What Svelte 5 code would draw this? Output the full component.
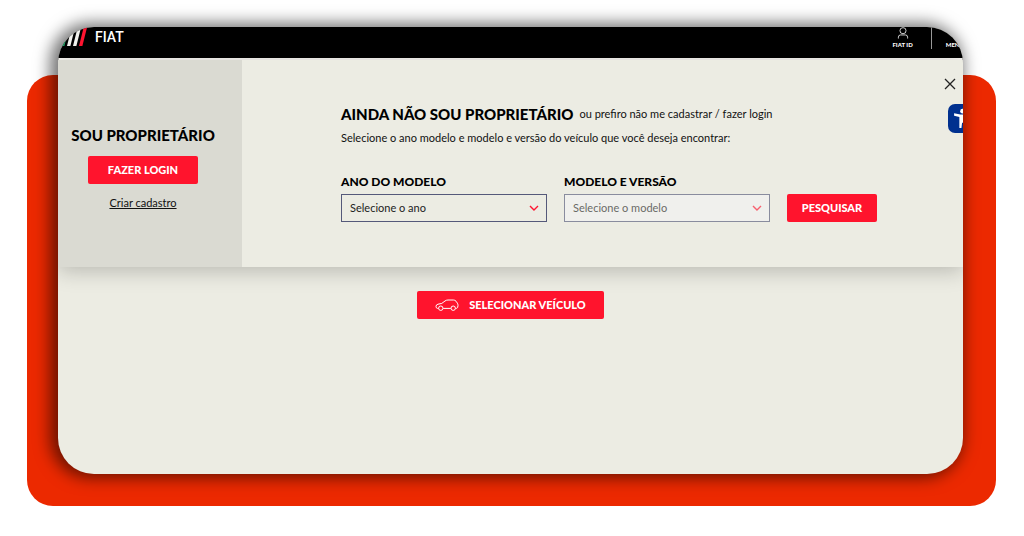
<script lang="ts">
  let year = $state("");
  let model = $state("");
  let open = $state(true);

  const bars = [
    { x: 0, color: "#1f9d63" },
    { x: 6, color: "#f2f2ee" },
    { x: 12, color: "#f2f2ee" },
    { x: 18, color: "#ff1430" },
  ];
</script>

{#snippet chevron()}
  <svg class="chevron" viewBox="0 0 10 6" aria-hidden="true">
    <path d="M1 1 L5 5 L9 1" fill="none" stroke="#ff1430" stroke-width="1.4" />
  </svg>
{/snippet}

<div class="backdrop">
  <div class="card">
    <header class="topbar">
      <a class="logo" href="#home">
        <svg class="logo-bars" viewBox="0 0 26 20" aria-hidden="true">
          {#each bars as bar}
            <path d="M{bar.x} 20 L{bar.x + 5} 0 h3.4 L{bar.x + 3.4} 20 Z" fill={bar.color} />
          {/each}
        </svg>
        <span>FIAT</span>
      </a>
      <nav class="nav">
        <a class="nav-item" href="#fiat-id">
          <svg class="user" viewBox="0 0 12 13" aria-hidden="true">
            <circle cx="6" cy="4" r="3.3" />
            <path d="M1 12.5 V11 Q1 8.6 3.4 8.6 H8.6 Q11 8.6 11 11 V12.5" />
          </svg>
          FIAT ID
        </a>
        <span class="divider"></span>
        <a class="nav-item" href="#menu">MENU</a>
      </nav>
    </header>

    {#if open}
      <section class="panel">
        <aside class="owner">
          <h2>SOU PROPRIETÁRIO</h2>
          <button class="btn login">FAZER LOGIN</button>
          <a class="signup" href="#cadastro">Criar cadastro</a>
        </aside>

        <div class="guest">
          <div class="title">
            <h2>AINDA NÃO SOU PROPRIETÁRIO</h2>
            <span>ou prefiro não me cadastrar / fazer login</span>
          </div>
          <p>Selecione o ano modelo e modelo e versão do veículo que você deseja encontrar:</p>

          <form class="search" onsubmit={(e) => e.preventDefault()}>
            <div class="field">
              <label for="year">ANO DO MODELO</label>
              <div class="select">
                <select id="year" bind:value={year}>
                  <option value="">Selecione o ano</option>
                  <option value="2024">2024</option>
                  <option value="2023">2023</option>
                </select>
                {@render chevron()}
              </div>
            </div>
            <div class="field">
              <label for="model">MODELO E VERSÃO</label>
              <div class="select" class:disabled={!year}>
                <select id="model" bind:value={model} disabled={!year}>
                  <option value="">Selecione o modelo</option>
                </select>
                {@render chevron()}
              </div>
            </div>
            <button class="btn submit">PESQUISAR</button>
          </form>
        </div>

        <button class="close" aria-label="Fechar" onclick={() => (open = false)}>
          <svg viewBox="0 0 12 12" aria-hidden="true">
            <path d="M1 1 L11 11 M11 1 L1 11" stroke="#222" stroke-width="1.3" />
          </svg>
        </button>
      </section>
    {/if}

    <main class="content">
      <button class="btn vehicle" onclick={() => (open = true)}>
        <svg class="car" viewBox="0 0 24 12" aria-hidden="true">
          <path
            d="M3.4 9.4 H2.4 Q1 9.2 1 7.4 Q1 5.6 3 5.2 L6.8 4.4 L10 2 Q11.2 1 13 1 H18.4 Q20 1 21 2.2 L22.4 4.2 Q23 5 23 6.6 Q23 9.2 21.4 9.4 H20.6 M15.8 9.4 H8.2"
          />
          <circle cx="5.8" cy="9.2" r="2.2" />
          <circle cx="18.2" cy="9.2" r="2.2" />
        </svg>
        SELECIONAR VEÍCULO
      </button>
    </main>

    <button class="a11y" aria-label="Acessibilidade">
      <svg viewBox="0 0 20 20" aria-hidden="true">
        <circle cx="10" cy="3" r="2.2" />
        <path d="M2 5 L8 6.2 H12 L18 5 V7.4 L13 8.6 V19 H11 L10.4 14 H9.6 L9 19 H7 V8.6 L2 7.4 Z" />
      </svg>
    </button>
  </div>
</div>

<style>
  :global(body) {
    margin: 0;
    background: #fff;
    font-family: Lato, "Liberation Sans", sans-serif;
    font-size: 11px;
    line-height: 20px;
    color: #111;
  }

  .backdrop {
    display: flex;
    margin: 75px 28px 30px 27px;
    padding: 0 33px 32px 31px;
    background: #ec2900;
    border-radius: 26px;
  }

  .card {
    flex: 1;
    position: relative;
    display: flex;
    flex-direction: column;
    min-width: 0;
    margin-top: -48px;
    overflow: hidden;
    background: #ecece3;
    border-radius: 36px;
    box-shadow: -4px 0 16px 4px rgba(0, 0, 0, 0.55);
  }

  h2,
  p {
    margin: 0;
  }

  h2 {
    font-size: 15px;
    font-weight: 900;
    line-height: 20px;
    color: #000;
    white-space: nowrap;
  }

  .topbar {
    display: flex;
    justify-content: space-between;
    height: 31px;
    background: #000;
    border-bottom: 2px solid #f8f6f2;
  }

  .logo,
  .nav-item {
    color: #fff;
    text-decoration: none;
  }

  .logo {
    display: flex;
    gap: 8px;
    padding-left: 3px;
    font-family: Roboto, sans-serif;
    font-size: 14px;
    font-weight: 500;
  }

  .logo-bars {
    width: 26px;
    height: 20px;
    margin-top: -1px;
  }

  .nav {
    display: flex;
    gap: 14px;
    margin-right: -1px;
    font-size: 6px;
    font-weight: 900;
    line-height: 8px;
  }

  .nav-item {
    display: flex;
    flex-direction: column;
    justify-content: flex-end;
    align-items: center;
    gap: 2px;
    padding-bottom: 9px;
  }

  .user {
    width: 12px;
    height: 13px;
    fill: none;
    stroke: #ddd;
    stroke-width: 1;
  }

  .divider {
    width: 1px;
    height: 22px;
    margin-left: 4px;
    background: #999;
  }

  .panel {
    position: relative;
    display: flex;
    box-shadow: 0 4px 20px rgba(0, 0, 0, 0.22);
  }

  .owner {
    display: flex;
    flex-direction: column;
    align-items: center;
    flex: 0 0 184px;
    box-sizing: border-box;
    padding: 65px 14px 54px 0;
    background: #dadad2;
  }

  .btn {
    display: inline-flex;
    align-items: center;
    justify-content: center;
    height: 28px;
    padding: 0 0 2px;
    border: none;
    border-radius: 2px;
    background: #ff142d;
    color: #fff;
    font-family: inherit;
    font-size: 11px;
    font-weight: 900;
    cursor: pointer;
  }

  .login {
    width: 110px;
    margin: 11px 0 9px;
  }

  .signup {
    color: inherit;
  }

  .guest {
    flex: 1;
    padding: 44px 80px 45px 99px;
  }

  .title {
    display: flex;
    gap: 6px;
    margin-bottom: 4px;
    white-space: nowrap;
  }

  .search {
    display: flex;
    align-items: flex-end;
    gap: 17px;
    margin-top: 24px;
  }

  .field {
    flex: 0 1 206px;
  }

  label {
    display: block;
    margin-bottom: 2px;
    font-size: 12px;
    font-weight: 900;
    color: #000;
  }

  .select {
    position: relative;
  }

  select {
    display: block;
    width: 100%;
    height: 28px;
    padding: 0 28px 2px 8px;
    appearance: none;
    background: transparent;
    border: 1px solid #55597a;
    border-radius: 0;
    color: #222;
    font-family: inherit;
    font-size: 11px;
  }

  .disabled {
    opacity: 0.65;
    background: #f3f3f3;
  }

  .disabled select {
    opacity: 1;
  }

  .chevron {
    position: absolute;
    top: 11px;
    right: 8px;
    width: 10px;
    height: 6px;
    pointer-events: none;
  }

  .submit {
    width: 90px;
  }

  .close {
    position: absolute;
    top: 17px;
    right: 6px;
    display: flex;
    padding: 1px;
    border: none;
    background: none;
    cursor: pointer;
  }

  .close svg {
    width: 12px;
    height: 12px;
  }

  .content {
    display: flex;
    justify-content: center;
    align-items: flex-start;
    min-height: 183px;
    padding-top: 24px;
  }

  .vehicle {
    gap: 10px;
    padding: 0 18px 2px;
  }

  .car {
    width: 24px;
    height: 12px;
    margin-top: 2px;
    fill: none;
    stroke: #fff;
    stroke-width: 1;
  }

  .a11y {
    position: absolute;
    top: 77px;
    right: -14px;
    width: 29px;
    height: 29px;
    padding: 4px;
    border: none;
    border-radius: 7px;
    background: #00308f;
    cursor: pointer;
  }

  .a11y svg {
    display: block;
    fill: #fff;
  }
</style>
